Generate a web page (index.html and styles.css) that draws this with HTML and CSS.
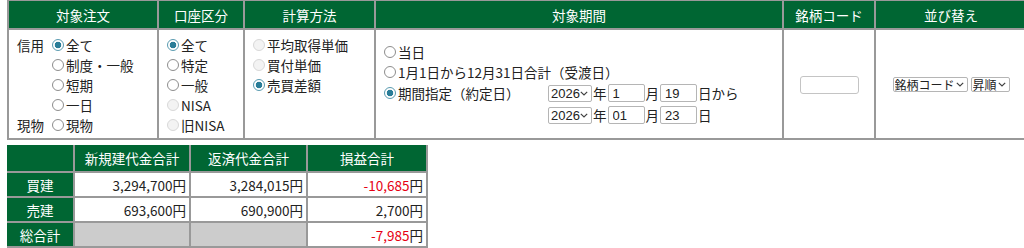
FILE: index.html
```html
<!DOCTYPE html>
<html lang="ja">
<head>
  <meta charset="UTF-8">
  <title>損益照会</title>
  <link rel="stylesheet" href="styles.css">
</head>
<body>
  <div class="page">
    <table class="search">
      <tr>
        <th class="w-order">対象注文</th>
        <th class="w-account">口座区分</th>
        <th class="w-calc">計算方法</th>
        <th class="w-period">対象期間</th>
        <th class="w-code">銘柄コード</th>
        <th class="w-sort">並び替え</th>
      </tr>
      <tr>
        <td class="top">
          <div class="order-grid">
            <span class="kind">信用</span>
            <div>
              <label class="opt"><input type="radio" name="order" checked>全て</label>
              <label class="opt"><input type="radio" name="order">制度・一般</label>
              <label class="opt"><input type="radio" name="order">短期</label>
              <label class="opt"><input type="radio" name="order">一日</label>
            </div>
            <span class="kind">現物</span>
            <div>
              <label class="opt"><input type="radio" name="order">現物</label>
            </div>
          </div>
        </td>
        <td class="top">
          <label class="opt"><input type="radio" name="account" checked>全て</label>
          <label class="opt"><input type="radio" name="account">特定</label>
          <label class="opt"><input type="radio" name="account">一般</label>
          <label class="opt off"><input type="radio" name="account" disabled>NISA</label>
          <label class="opt off"><input type="radio" name="account" disabled>旧NISA</label>
        </td>
        <td class="top">
          <label class="opt off"><input type="radio" name="calc" disabled>平均取得単価</label>
          <label class="opt off"><input type="radio" name="calc" disabled>買付単価</label>
          <label class="opt"><input type="radio" name="calc" checked>売買差額</label>
        </td>
        <td class="period">
          <label class="opt"><input type="radio" name="period">当日</label>
          <label class="opt"><input type="radio" name="period">1月1日から12月31日合計（受渡日）</label>
          <div class="range">
            <label class="opt range-label"><input type="radio" name="period" checked>期間指定（約定日）</label>
            <div class="dates">
              <div class="date-row">
                <select class="year"><option>2026</option></select><span>年</span><input class="day" type="text" value="1"><span>月</span><input class="day" type="text" value="19"><span>日から</span>
              </div>
              <div class="date-row">
                <select class="year"><option>2026</option></select><span>年</span><input class="day" type="text" value="01"><span>月</span><input class="day" type="text" value="23"><span>日</span>
              </div>
            </div>
          </div>
        </td>
        <td class="center">
          <input class="code" type="text">
        </td>
        <td class="center">
          <div class="sort">
            <select class="small"><option>銘柄コード</option></select>
            <select class="small"><option>昇順</option></select>
          </div>
        </td>
      </tr>
    </table>

    <table class="totals">
      <tr>
        <th class="c-label"></th>
        <th class="c-new">新規建代金合計</th>
        <th class="c-back">返済代金合計</th>
        <th class="c-pl">損益合計</th>
      </tr>
      <tr>
        <th>買建</th>
        <td>3,294,700円</td>
        <td>3,284,015円</td>
        <td><span class="minus">-10,685</span>円</td>
      </tr>
      <tr>
        <th>売建</th>
        <td>693,600円</td>
        <td>690,900円</td>
        <td>2,700円</td>
      </tr>
      <tr>
        <th>総合計</th>
        <td class="blank"></td>
        <td class="blank"></td>
        <td><span class="minus">-7,985</span>円</td>
      </tr>
    </table>
  </div>
</body>
</html>
```

FILE: styles.css
```css
body {
  margin: 0;
  font-family: "Noto Sans CJK JP", sans-serif;
  font-size: 13.5px;
  color: #222;
  background: #fff;
  overflow: hidden;
}
.page {
  padding-left: 7px;
}
table {
  border-spacing: 0;
  table-layout: fixed;
}
th {
  background-color: #006633;
  color: #fff;
  font-weight: normal;
}
th, td {
  box-sizing: border-box;
  padding: 0;
  border-right: 2px solid #999;
  border-bottom: 2px solid #999;
}

/* search conditions */
.search {
  width: 1021px;
  border-left: 2px solid #999;
  border-top: 1px solid #999;
}
.search th {
  height: 29px;
}
.search td {
  height: 110px;
}
.w-order { width: 150px; }
.w-account { width: 86px; }
.w-calc { width: 131px; }
.w-period { width: 408px; }
.w-code { width: 92px; }
.w-sort { width: 152px; }
.top {
  vertical-align: top;
  padding: 5px 0 0 8px !important;
}
.period {
  vertical-align: middle;
  padding-left: 8px !important;
}
.center {
  text-align: center;
  vertical-align: middle;
}
.opt {
  display: flex;
  align-items: center;
  line-height: 20px;
  white-space: nowrap;
}
.order-grid {
  display: grid;
  grid-template-columns: 35px auto;
}
.kind {
  line-height: 20px;
}
input[type="radio"] {
  appearance: none;
  width: 12px;
  height: 12px;
  margin: 0 2px 0 0;
  border: 1px solid #8d8d8d;
  border-radius: 50%;
  background: #fff;
  flex: none;
}
input[type="radio"]:checked {
  border-color: #5a9bb0;
  background: radial-gradient(circle, #2a7d98 0 3px, #fff 3.6px);
}
input[type="radio"]:disabled {
  border-color: #d8d8d8;
  background: #f3f3f3;
}
.range {
  display: flex;
  align-items: flex-start;
}
.range-label {
  width: 164px;
  height: 22px;
}
.date-row {
  display: flex;
  align-items: center;
  gap: 1px;
  height: 22px;
}
select, .day, .code {
  font-family: "Liberation Sans", Arial, sans-serif;
  color: #222;
  border: 1px solid #b5b5b5;
  border-radius: 2px;
  background-color: #fff;
  box-sizing: border-box;
  outline: none;
}
select {
  appearance: none;
  background-image: url("data:image/svg+xml,%3Csvg xmlns='http://www.w3.org/2000/svg' width='8' height='5' viewBox='0 0 8 5'%3E%3Cpath d='M0.8 0.8 L4 4 L7.2 0.8' fill='none' stroke='%23444' stroke-width='1.2'/%3E%3C/svg%3E");
  background-repeat: no-repeat;
  background-position: right 3px center;
}
.year {
  width: 44px;
  height: 17px;
  font-size: 13px;
  line-height: 15px;
  padding: 0 11px 0 2px;
}
.day {
  width: 37px;
  height: 18px;
  font-size: 13px;
  padding: 0 4px;
}
.code {
  width: 59px;
  height: 18px;
  border-color: #c4c4c4;
  border-radius: 3px;
}
.sort {
  display: flex;
  justify-content: center;
  gap: 3px;
}
.small {
  height: 15px;
  font-family: "Noto Sans CJK JP", sans-serif;
  font-size: 12px;
  line-height: 13px;
  padding: 0 11px 0 1px;
}

/* totals */
.totals {
  width: 421px;
  margin-top: 5px;
}
.totals th {
  height: 28px;
}
.totals tr + tr th, .totals td {
  height: 25px;
}
.c-label { width: 68px; }
.c-new { width: 116px; }
.c-back { width: 117px; }
.c-pl { width: 120px; }
.totals td {
  text-align: right;
  padding-right: 3px;
  white-space: nowrap;
}
.totals .blank {
  background-color: #cccccc;
}
.minus {
  color: #e60012;
}
```
